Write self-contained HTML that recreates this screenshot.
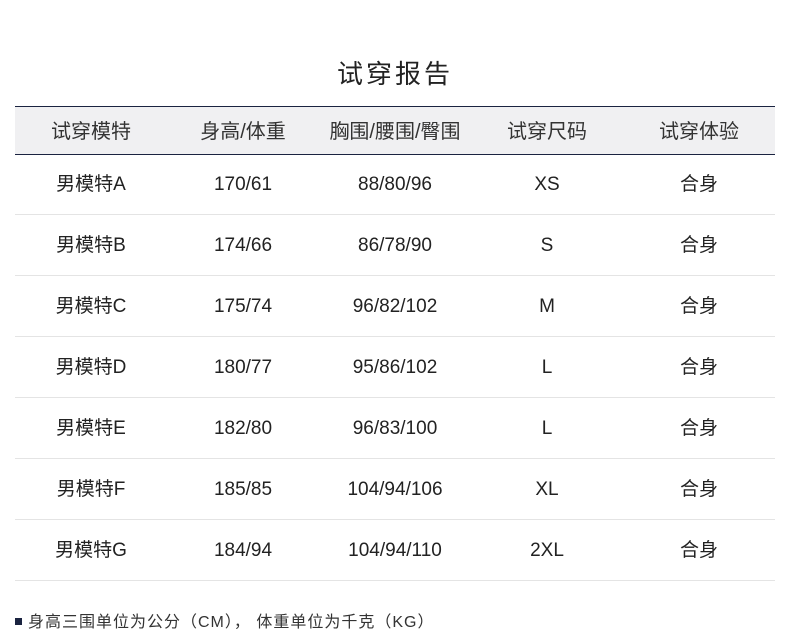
<!DOCTYPE html>
<html><head><meta charset="utf-8"><style>
body{margin:0;width:790px;height:628px;background:#fff;font-family:"Liberation Sans","Noto Sans CJK SC",sans-serif;color:#222;position:relative;overflow:hidden}
.t{position:absolute;top:54px;left:0;width:790px;text-align:center;font-size:26px;letter-spacing:3px;color:#222}
.hd{position:absolute;left:15px;top:106px;width:760px;height:47px;background:#f0f0f2;border-top:1.5px solid #1a2340;border-bottom:1.5px solid #1a2340}
.r{position:absolute;left:15px;width:760px;height:60px;border-bottom:1px solid #e4e4e4}
.c{position:absolute;top:0;width:152px;text-align:center}
.hd .c{line-height:50px;font-size:20px;color:#333}
.r .c{line-height:62px;font-size:19px;color:#222}
.n{position:absolute;left:15px;top:608px;font-size:16px;color:#333;letter-spacing:1px}
.n:before{content:"";display:inline-block;width:7px;height:7px;background:#1a2340;margin-right:6px;vertical-align:2px}
</style></head><body>
<div class="t">试穿报告</div>
<div class="hd"><div class="c" style="left:0">试穿模特</div><div class="c" style="left:152px">身高/体重</div><div class="c" style="left:304px">胸围/腰围/臀围</div><div class="c" style="left:456px">试穿尺码</div><div class="c" style="left:608px">试穿体验</div></div>
<div class="r" style="top:154px"><div class="c" style="left:0">男模特A</div><div class="c" style="left:152px">170/61</div><div class="c" style="left:304px">88/80/96</div><div class="c" style="left:456px">XS</div><div class="c" style="left:608px">合身</div></div>
<div class="r" style="top:215px"><div class="c" style="left:0">男模特B</div><div class="c" style="left:152px">174/66</div><div class="c" style="left:304px">86/78/90</div><div class="c" style="left:456px">S</div><div class="c" style="left:608px">合身</div></div>
<div class="r" style="top:276px"><div class="c" style="left:0">男模特C</div><div class="c" style="left:152px">175/74</div><div class="c" style="left:304px">96/82/102</div><div class="c" style="left:456px">M</div><div class="c" style="left:608px">合身</div></div>
<div class="r" style="top:337px"><div class="c" style="left:0">男模特D</div><div class="c" style="left:152px">180/77</div><div class="c" style="left:304px">95/86/102</div><div class="c" style="left:456px">L</div><div class="c" style="left:608px">合身</div></div>
<div class="r" style="top:398px"><div class="c" style="left:0">男模特E</div><div class="c" style="left:152px">182/80</div><div class="c" style="left:304px">96/83/100</div><div class="c" style="left:456px">L</div><div class="c" style="left:608px">合身</div></div>
<div class="r" style="top:459px"><div class="c" style="left:0">男模特F</div><div class="c" style="left:152px">185/85</div><div class="c" style="left:304px">104/94/106</div><div class="c" style="left:456px">XL</div><div class="c" style="left:608px">合身</div></div>
<div class="r" style="top:520px"><div class="c" style="left:0">男模特G</div><div class="c" style="left:152px">184/94</div><div class="c" style="left:304px">104/94/110</div><div class="c" style="left:456px">2XL</div><div class="c" style="left:608px">合身</div></div>
<div class="n">身高三围单位为公分（CM）， 体重单位为千克（KG）</div>
</body></html>
